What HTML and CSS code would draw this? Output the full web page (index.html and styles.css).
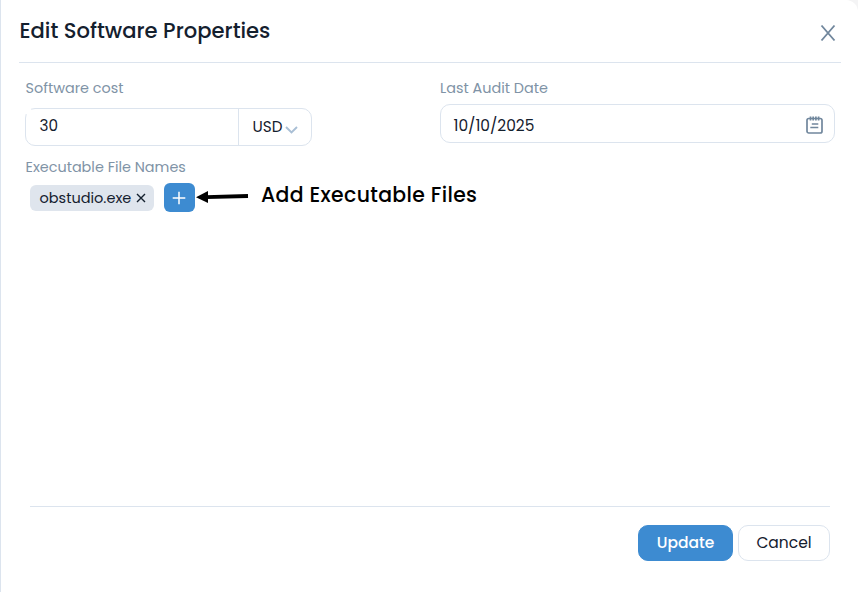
FILE: index.html
```html
<!DOCTYPE html>
<html lang="en">
<head>
<meta charset="utf-8">
<title>Edit Software Properties</title>
<link rel="stylesheet" href="styles.css">
</head>
<body>
<main class="dialog">
  <header class="header">
    <h1 class="title">Edit Software Properties</h1>
    <svg class="close" width="16" height="18" viewBox="0 0 16 18"><path d="M1.5 1.5 14.5 16.5M14.5 1.5 1.5 16.5"/></svg>
  </header>
  <div class="fields">
    <section class="field cost">
      <label class="label label-cost">Software cost</label>
      <div class="cost-box">
        <div class="amount">30</div>
        <div class="currency"><span class="usd">USD</span><svg class="chevron" width="13" height="8" viewBox="0 0 13 8"><path d="M1 1 6.5 6.5 12 1"/></svg></div>
      </div>
    </section>
    <section class="field date">
      <label class="label label-date">Last Audit Date</label>
      <div class="date-box">
        <span class="date-value">10/10/2025</span>
        <svg class="calendar" width="17" height="18" viewBox="0 0 17 18"><rect x="1" y="2.5" width="15" height="14.5" rx="1.8"/><path d="M4.5.5v4M7.2.5v4M9.9.5v4M12.6.5v4M5.8 8h6.5M4.3 11.5h8"/></svg>
      </div>
    </section>
  </div>
  <section class="files">
    <label class="label label-files">Executable File Names</label>
    <div class="file-row">
      <span class="tag"><span class="tag-name">obstudio.exe</span><svg class="remove" width="10" height="10" viewBox="0 0 10 10"><path d="M1 1 9 9M9 1 1 9"/></svg></span>
      <span class="add"><svg width="14" height="14" viewBox="0 0 14 14"><path d="M7 .7v12.6M.7 7h12.6"/></svg></span>
      <svg class="arrow" width="53" height="14" viewBox="0 0 53 14"><path class="shaft" d="M10 7.2 52 6"/><path d="M0 7.3 12 1v12z"/></svg>
      <span class="hint">Add Executable Files</span>
    </div>
  </section>
  <footer class="footer">
    <button class="button update"><span>Update</span></button>
    <button class="button cancel"><span>Cancel</span></button>
  </footer>
</main>
</body>
</html>
```

FILE: styles.css
```css
* { box-sizing: border-box; }
body { margin: 0; background: #f4f4f5; }
.dialog {
  height: 592px;
  display: flex;
  flex-direction: column;
  background: #fff;
  border-left: 1px solid #dce4ee;
  border-top-right-radius: 12px;
  padding: 0 17px 0 18px;
  color: #14202e;
  font-family: Poppins, Inter, sans-serif;
  font-size: 15px;
  white-space: nowrap;
}
svg { fill: none; flex: none; }
.header {
  height: 63px;
  display: flex;
  justify-content: space-between;
  border-bottom: 1px solid #dce4ee;
}
.title { margin: 15px 0 0 .5px; font-size: 21.1px; line-height: 32px; font-weight: 500; }
.close { margin: 24px 5px 0 0; stroke: #71879d; stroke-width: 1.9; }
.fields { display: flex; justify-content: space-between; height: 92px; padding: 14px 6px 0; }
.label { display: block; color: #8093a6; font-size: 14.4px; line-height: 22px; }
.label-cost, .label-files { padding-left: .5px; }
.cost { width: 287px; }
.date { width: 395px; }
.cost-box {
  position: relative;
  display: flex;
  height: 38px;
  margin-top: 9px;
  border: 1px solid #dce4ee;
  border-radius: 10px;
}
/* The square corner of the amount input covers the rounded frame. */
.cost-box::before {
  content: "";
  position: absolute;
  left: 0;
  top: 0;
  width: 5px;
  height: 5px;
  background: #fff;
}
.amount { width: 213px; padding-left: 13.5px; line-height: 34px; font-size: 15.2px; border-right: 1px solid #dce4ee; }
.currency { display: flex; padding-left: 13.5px; line-height: 36px; }
.usd { width: 30px; font-size: 15.2px; }
.chevron { margin: 17px 0 0 2.5px; stroke: #a9bfd5; stroke-width: 1.9; }
.date-box {
  display: flex;
  justify-content: space-between;
  height: 39px;
  margin-top: 5px;
  padding: 0 11.5px 0 12.5px;
  border: 1px solid #dce4ee;
  border-radius: 10px;
  font-size: 15.4px;
  line-height: 42px;
}
.calendar { margin-top: 11px; stroke: #71879d; stroke-width: 1.7; }
.files { flex: 1; padding: 1px 6px; }
.file-row { display: flex; align-items: flex-start; height: 29px; margin-top: 5px; padding-left: 5px; }
.tag {
  display: flex;
  width: 124px;
  height: 26px;
  margin-top: 2px;
  padding-left: 9.5px;
  border-radius: 6px;
  background: #dfe5ed;
  font-size: 14.5px;
  line-height: 26px;
}
.remove { margin: 7.5px 0 0 4.5px; stroke: #14202e; stroke-width: 1.4; }
.add {
  display: grid;
  place-items: center;
  width: 31px;
  height: 29px;
  margin-left: 10px;
  padding-right: 1px;
  border-radius: 6px;
  background: #3d8bd1;
}
.add path { stroke: #fff; stroke-width: 1.5; }
.arrow { margin: 7px 0 0 1px; fill: #000; }
.shaft { stroke: #000; stroke-width: 3.8; }
.hint { margin-left: 12px; color: #000; font-size: 20.4px; font-weight: 500; letter-spacing: .35px; line-height: 24px; }
.footer {
  display: flex;
  justify-content: flex-end;
  gap: 5px;
  height: 86px;
  margin: 0 11px;
  padding-top: 18px;
  border-top: 1px solid #dce4ee;
}
.button {
  height: 36px;
  padding: 0;
  border: 1px solid #dce4ee;
  border-radius: 10px;
  background: #fff;
  color: #14202e;
  font: inherit;
  font-size: 15.5px;
  line-height: 34px;
}
.update { width: 95px; border-color: #3d8bd1; background: #3d8bd1; color: #fff; font-weight: 500; }
.cancel { width: 92px; }
```
